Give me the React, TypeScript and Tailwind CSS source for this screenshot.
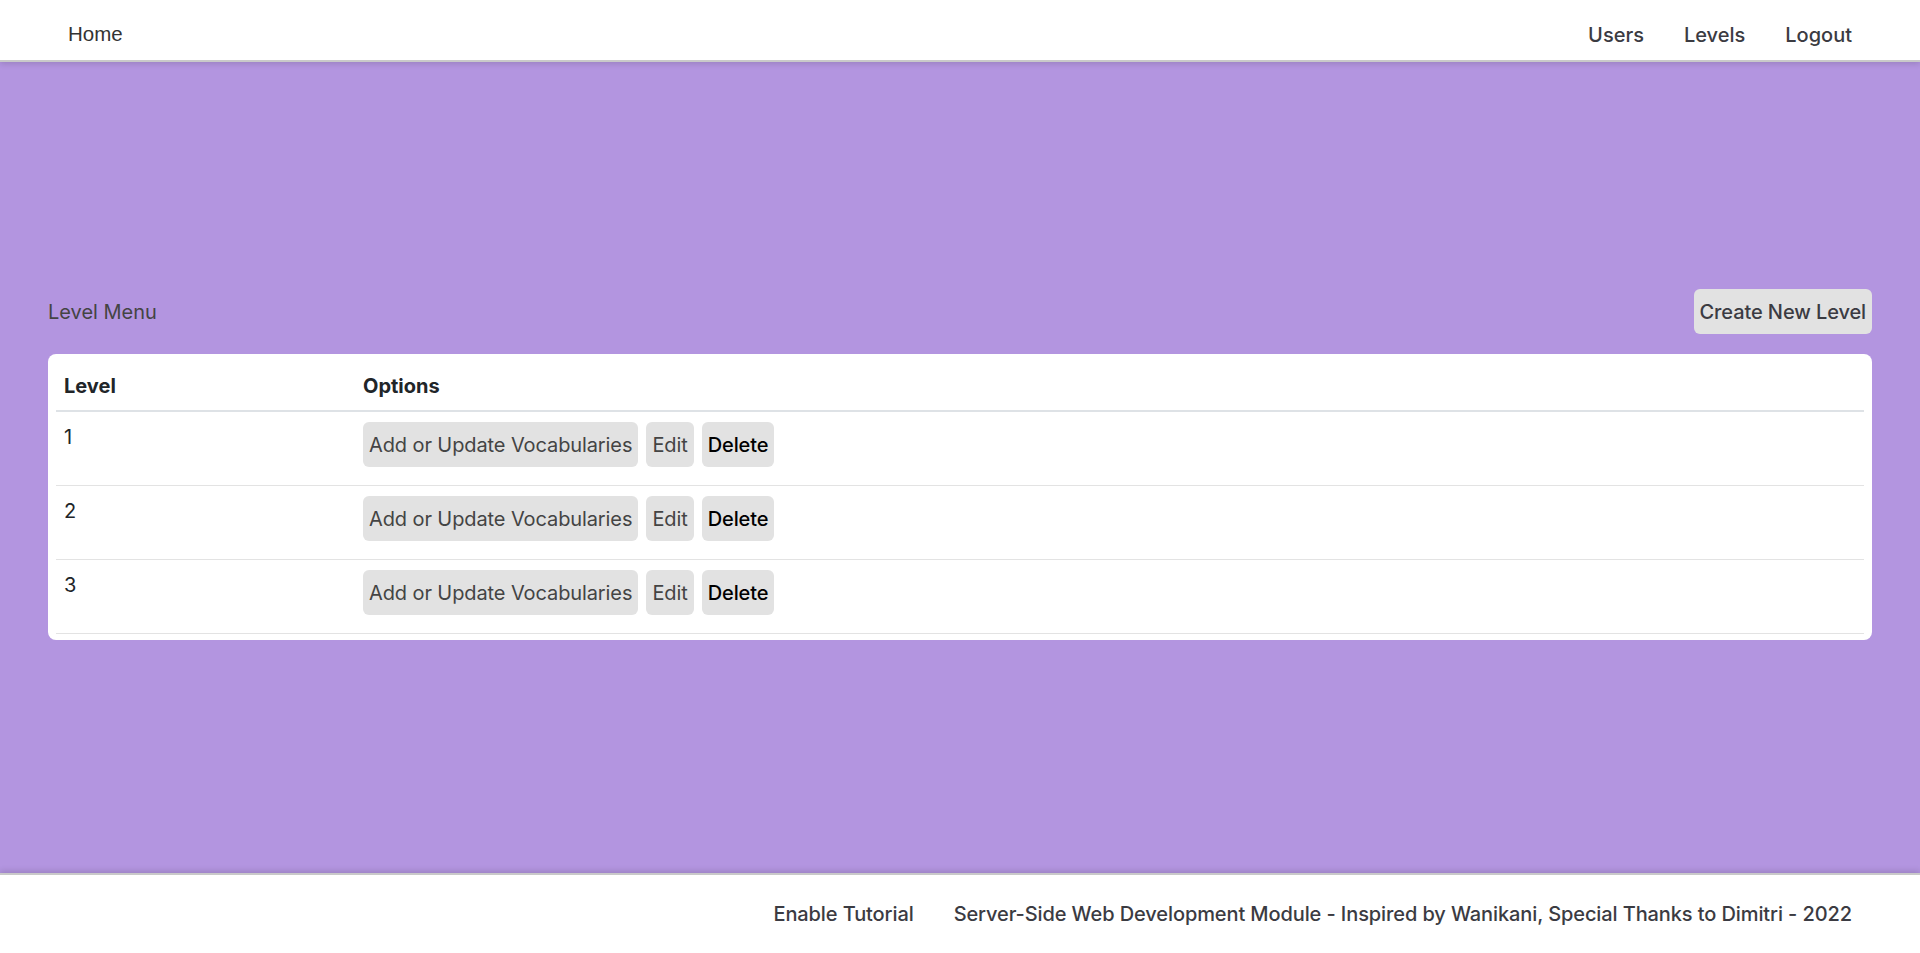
import React from "react";

const levels = [1, 2, 3];

const btn =
  "h-[45px] px-1.5 rounded-md bg-[#e2e2e2] text-[20px] leading-[30px] whitespace-nowrap tracking-[-0.1px]";

export default function App() {
  return (
    <div
      className="min-h-screen flex flex-col bg-[#b395e0] text-[#3b3b42]"
      style={{ fontFamily: "Inter, 'Noto Sans', sans-serif" }}
    >
      {/* Top navigation */}
      <nav className="relative z-10 h-[62px] pt-[9px] bg-white border-b-2 border-[#c9c9c9] shadow-[0_2px_6px_rgba(0,0,0,0.14)] flex items-center justify-between px-12">
        <a
          href="#"
          className="px-5 text-[20.5px] text-[#333]"
          style={{ fontFamily: "'Liberation Sans', Arial, sans-serif" }}
        >
          Home
        </a>
        <div className="flex items-center">
          <a href="#" className="px-5 text-[20px] font-medium">
            Users
          </a>
          <a href="#" className="px-5 text-[20px] font-medium">
            Levels
          </a>
          <a href="#" className="px-5 text-[20px] font-medium">
            Logout
          </a>
        </div>
      </nav>

      <main className="flex-1 px-12 pt-[227px]">
        <div className="flex items-center justify-between">
          <h2 className="text-[20px] text-[#444]">Level Menu</h2>
          <button className={btn + " font-medium text-[#3b3b42]"}>
            Create New Level
          </button>
        </div>

        {/* Levels table */}
        <div className="mt-5 bg-white rounded-lg px-2 pt-2 pb-1.5">
          <table className="w-full border-collapse text-left text-[20px] leading-[30px] text-[#212529]">
            <thead>
              <tr className="border-b-2 border-[#dee2e6]">
                <th className="w-[299px] px-2 pt-[9px] pb-[9px] font-bold">
                  Level
                </th>
                <th className="px-2 pt-[9px] pb-[9px] font-bold">Options</th>
              </tr>
            </thead>
            <tbody>
              {levels.map((lvl) => (
                <tr key={lvl} className="border-b border-[#e3e3e3]">
                  <td className="px-2 pt-[10px] pb-[18px] align-top">{lvl}</td>
                  <td className="px-2 pt-[10px] pb-[18px] align-top">
                    <div className="flex items-center gap-2">
                      <button className={btn + " text-[#444]"}>
                        Add or Update Vocabularies
                      </button>
                      <button className={btn + " text-[#444]"}>Edit</button>
                      <button className={btn + " text-black font-medium"}>
                        Delete
                      </button>
                    </div>
                  </td>
                </tr>
              ))}
            </tbody>
          </table>
        </div>
      </main>

      {/* Footer */}
      <footer className="relative z-10 h-[80px] bg-white border-t-2 border-[#c9c9c9] shadow-[0_-2px_6px_rgba(0,0,0,0.14)] flex items-center justify-end px-12 tracking-[-0.1px]">
        <a href="#" className="px-5 text-[20px] font-medium">
          Enable Tutorial
        </a>
        <span className="px-5 text-[20px] font-medium">
          Server-Side Web Development Module - Inspired by Wanikani, Special
          Thanks to Dimitri - 2022
        </span>
      </footer>
    </div>
  );
}
